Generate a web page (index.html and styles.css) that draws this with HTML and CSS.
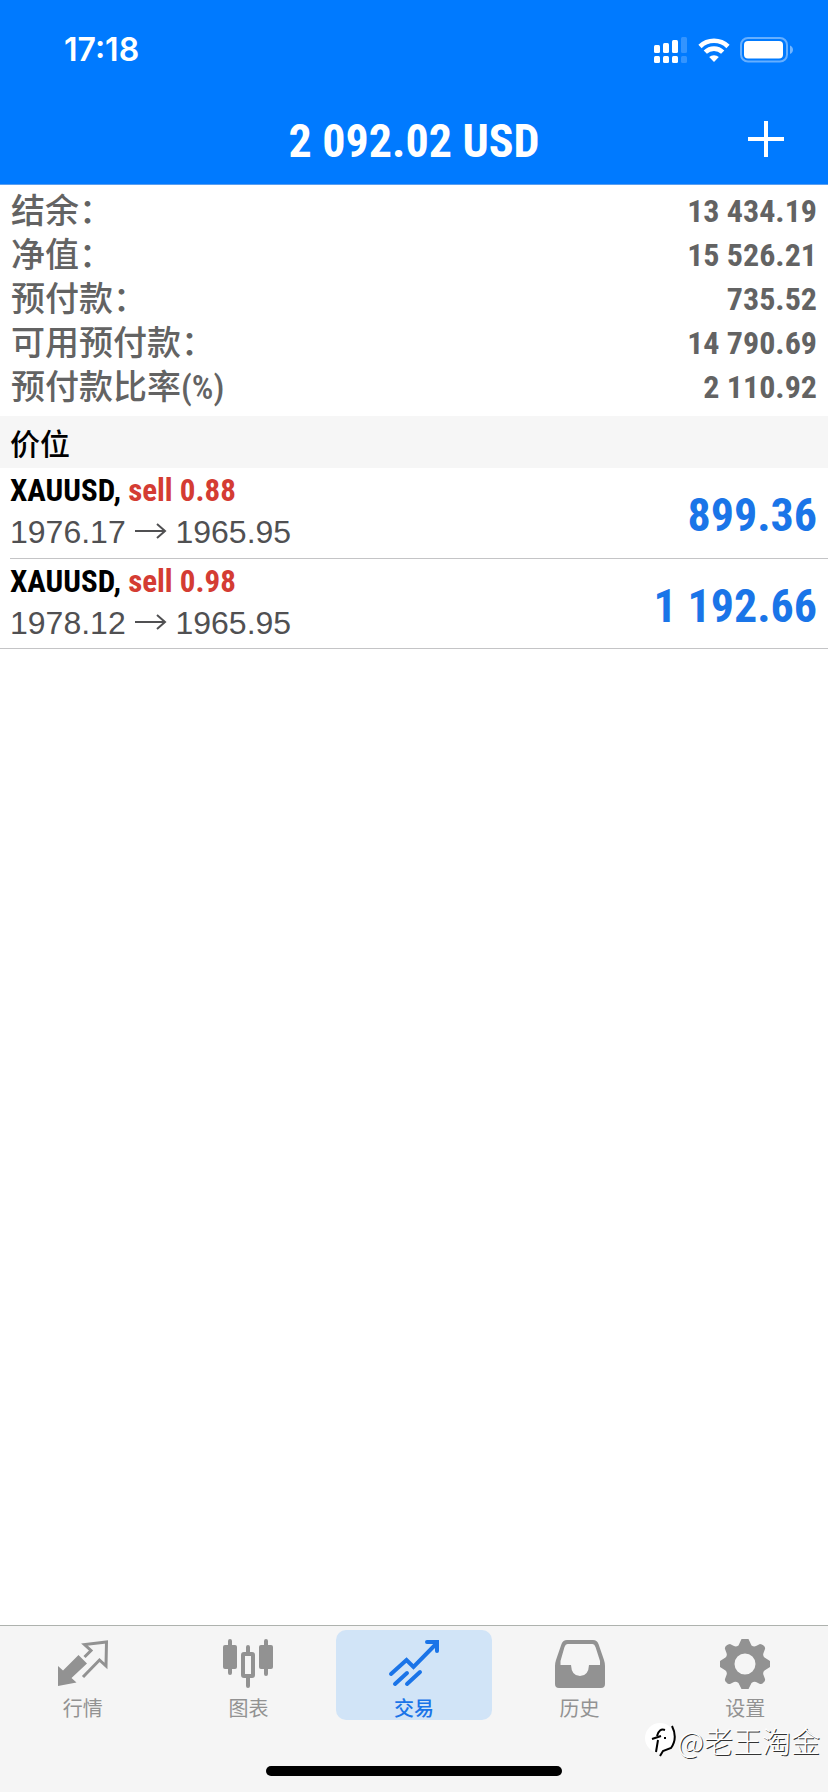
FILE: index.html
```html
<!DOCTYPE html>
<html lang="zh-CN">
<head>
<meta charset="utf-8">
<meta name="viewport" content="width=device-width, initial-scale=1">
<title>交易</title>
<link rel="stylesheet" href="styles.css">
</head>
<body>
<div class="app">
  <header class="header">
    <div class="status">
      <time class="clock">17:18</time>
      <div class="status-icons">
        <svg class="signal" width="34" height="28" viewBox="0 0 34 28" fill="#fff" aria-hidden="true">
          <rect x="0" y="9" width="6" height="8" rx="1.5"/><rect x="9" y="7" width="6" height="10" rx="1.5"/><rect x="18" y="4" width="6" height="13" rx="1.5"/><rect x="27" y="1" width="6" height="16" rx="1.5" opacity=".2"/>
          <rect x="0" y="20" width="6" height="7" rx="1.5"/><rect x="9" y="20" width="6" height="7" rx="1.5"/><rect x="18" y="20" width="6" height="7" rx="1.5"/><rect x="27" y="20" width="6" height="7" rx="1.5" opacity=".2"/>
        </svg>
        <svg class="wifi" width="32" height="26" viewBox="0 0 32 26" fill="none" stroke="#fff" stroke-width="4.6" aria-hidden="true">
          <path d="M2 9.5A20 20 0 0 1 30 9.5"/><path d="M7.3 15.2A12.4 12.4 0 0 1 24.7 15.2"/><path d="M16 25l-4.8-4.9a6.9 6.9 0 0 1 9.6 0z" fill="#fff" stroke="none"/>
        </svg>
        <svg class="battery" width="54" height="26" viewBox="0 0 54 26" aria-hidden="true">
          <rect x="1" y="1" width="46" height="23.500" rx="7" fill="none" stroke="#fff" stroke-width="2" opacity=".4"/><rect x="4" y="4" width="39" height="17.500" rx="4" fill="#fff"/><path d="M50 8.500c4 1.500 4 7 0 8.500z" fill="#fff" opacity=".45"/>
        </svg>
      </div>
    </div>
    <div class="navbar">
      <h1 class="title">2 092.02 USD</h1>
      <button class="add" type="button" aria-label="新订单">
        <svg width="36" height="36" viewBox="0 0 36 36" stroke="#fff" stroke-width="4" aria-hidden="true"><path d="M0 18H36M18 0V36"/></svg>
      </button>
    </div>
  </header>

  <main class="main">
    <dl class="stats">
      <div class="stat"><dt>结余：</dt><dd>13 434.19</dd></div>
      <div class="stat"><dt>净值：</dt><dd>15 526.21</dd></div>
      <div class="stat"><dt>预付款：</dt><dd>735.52</dd></div>
      <div class="stat"><dt>可用预付款：</dt><dd>14 790.69</dd></div>
      <div class="stat"><dt>预付款比率(%)</dt><dd>2 110.92</dd></div>
    </dl>
    <h2 class="section">价位</h2>
    <ul class="positions">
      <li class="position">
        <div class="info">
          <p class="deal">XAUUSD, <span class="sell">sell 0.88</span></p>
          <p class="prices">1976.17 <svg class="arrow" width="32" height="20" viewBox="0 0 32 20" role="img" aria-label="至"><path d="M0 8H30M22 1L30 8L22 15"/></svg> 1965.95</p>
        </div>
        <span class="profit">899.36</span>
      </li>
      <li class="position">
        <div class="info">
          <p class="deal">XAUUSD, <span class="sell">sell 0.98</span></p>
          <p class="prices">1978.12 <svg class="arrow" width="32" height="20" viewBox="0 0 32 20" role="img" aria-label="至"><path d="M0 8H30M22 1L30 8L22 15"/></svg> 1965.95</p>
        </div>
        <span class="profit">1 192.66</span>
      </li>
    </ul>
  </main>

  <footer class="footer">
    <nav class="tabs">
      <button class="tab" type="button">
        <svg class="icon" viewBox="0 0 52 52" aria-hidden="true">
          <path d="M1 28L6 32.500L21.500 17L30 25.500L14.500 40L19.500 44.500L1 48z" fill="currentColor"/>
          <path d="M27.500 19L34 12.500L27.500 6.500L49.500 4L49 28L42.500 22L26 39" fill="none" stroke="currentColor" stroke-width="3"/>
        </svg>
        <span>行情</span>
      </button>
      <button class="tab" type="button">
        <svg class="icon" viewBox="0 0 52 52" aria-hidden="true">
          <g fill="currentColor"><rect x="1" y="7" width="14" height="24" rx="2"/><rect x="37" y="7" width="14" height="24" rx="2"/></g>
          <path d="M8 3V35M44 3V36M26 9V16M26 40V48" stroke="currentColor" stroke-width="4" stroke-linecap="round"/>
          <rect x="21" y="16" width="10" height="22" rx="1" fill="none" stroke="currentColor" stroke-width="4"/>
        </svg>
        <span>图表</span>
      </button>
      <button class="tab tab-active" type="button" aria-current="page">
        <svg class="icon" viewBox="0 0 52 52" fill="none" stroke="currentColor" stroke-width="4" stroke-linecap="round" aria-hidden="true">
          <path d="M3 36L18.500 22L25.500 29L49 5M39 4H49V13M7 46L19 35M19 46L32 34"/>
        </svg>
        <span>交易</span>
      </button>
      <button class="tab" type="button">
        <svg class="icon" viewBox="0 0 52 52" aria-hidden="true">
          <path fill="currentColor" fill-rule="evenodd" d="M13 2H39Q43 2 44.500 6L50 22Q51 25 51 28V46Q51 50 47 50H5Q1 50 1 46V28Q1 25 2 22L7.500 6Q9 2 13 2zM13.500 6Q11.500 6 10.500 9L6.500 23V27H17Q17.500 38 26 38T35 27H46V23L41.500 9Q40.500 6 38.500 6z"/>
        </svg>
        <span>历史</span>
      </button>
      <button class="tab" type="button">
        <svg class="icon" viewBox="0 0 52 52" aria-hidden="true">
          <path fill="currentColor" fill-rule="evenodd" d="M22.500 1H29.500L32.500 7.500Q35 9 37 8L41 6Q43 6 44.500 7.500Q46.500 9 46 11L44.500 15Q43.500 18 45.500 19.500L51 23V29L45.500 32.500Q43.500 34 44.500 37L46 41Q46.500 43 44.500 44.500Q43 46.500 41 46L37 44Q35 43 32.500 45L29.500 51H22.500L19.500 45Q17 43 15 44L11 46Q9 46.500 7.500 44.500Q5.500 43 6 41L7.500 37Q8.500 34 6.500 32.500L1 29V23L6.500 19.500Q8.500 18 7.500 15L6 11Q5.500 9 7.500 7.500Q9 6 11 6L15 8Q17 9 19.500 7.500zM26 15.500A10.500 10.500 0 1 0 26 36.500A10.500 10.500 0 1 0 26 15.500z"/>
        </svg>
        <span>设置</span>
      </button>
    </nav>
    <div class="home-indicator"></div>
    <div class="watermark">
      <svg width="34" height="36" viewBox="0 0 34 36" fill="none" aria-hidden="true">
        <circle cx="16" cy="16" r="15" fill="#fff"/>
        <path d="M12 30L14 18M8 17L17 14M13 14Q15 6 21 8M20 16h2" stroke="#000" stroke-width="2"/><path d="M28 4Q34 16 27 26L19 29L16 34" stroke="#000" stroke-width="2"/>
      </svg>
      <span>@老王淘金</span>
    </div>
  </footer>
</div>
</body>
</html>
```
FILE: styles.css
```css
* {
  box-sizing: border-box;
}

body,
h1,
h2,
p,
dl,
dd,
ul {
  margin: 0;
  padding: 0;
}

body {
  --condensed: "Roboto Condensed", "Liberation Sans", "Noto Sans CJK SC", sans-serif;
  background: #fff;
  color: #000;
  font-family: "Liberation Sans", "Noto Sans CJK SC", sans-serif;
}

button {
  border: 0;
  padding: 0;
  background: none;
  color: inherit;
  font: inherit;
}

.app {
  display: flex;
  flex-direction: column;
  min-height: 100vh;
}

.header {
  background: #007aff;
  border-bottom: 1px solid #5a9ff0;
  color: #fff;
}

.status {
  display: flex;
  align-items: center;
  justify-content: space-between;
  height: 100px;
  padding: 0 34px 0 64px;
}

.clock {
  font: 600 32px/40px Inter, sans-serif;
}

.status-icons {
  display: flex;
  align-items: center;
  gap: 10px;
}

.navbar {
  display: grid;
  grid-template-columns: 1fr auto 1fr;
  align-items: center;
  height: 84px;
  padding: 0 44px 6px;
}

.title {
  grid-column: 2;
  padding-top: 4px;
  font: 700 46px/60px var(--condensed);
}

.add {
  justify-self: end;
  display: flex;
}

.main {
  flex: 1;
}

.stats {
  padding: 4px 11px 7px;
  color: #636363;
  font: 700 32px/44px var(--condensed);
}

.stat {
  display: flex;
  justify-content: space-between;
}

.stat dt {
  font-size: 34px;
  font-weight: 500;
}

.section {
  padding: 0 10px;
  background: #f6f6f6;
  font: 500 30px/52px "Noto Sans CJK SC", sans-serif;
}

.positions {
  list-style: none;
  border-bottom: 1px solid #c4c4c6;
}

.position {
  display: flex;
  align-items: center;
  justify-content: space-between;
  height: 90px;
  margin-left: 10px;
  padding-right: 11px;
}

.position + .position {
  border-top: 1px solid #c4c4c6;
}

.info {
  padding-bottom: 4px;
}

.deal {
  font: 700 31px/42px var(--condensed);
}

.sell {
  color: #d43c33;
}

.prices {
  color: #505052;
  font-size: 32px;
  line-height: 40px;
}

.arrow {
  fill: none;
  stroke: currentColor;
  stroke-width: 2;
}

.profit {
  padding-top: 4px;
  color: #1a75e8;
  font: 700 46px/60px var(--condensed);
}

.footer {
  position: relative;
  display: flex;
  flex-direction: column;
  align-items: center;
  gap: 46px;
  padding: 4px 0 16px;
  background: #f5f5f5;
  border-top: 1px solid #aeb2ae;
}

.tabs {
  display: grid;
  grid-template-columns: repeat(5, 1fr);
  width: 100%;
}

.tab {
  display: flex;
  flex-direction: column;
  align-items: center;
  gap: 6px;
  height: 90px;
  margin: 0 5px;
  padding-top: 8px;
  border-radius: 10px;
  color: #929292;
  font: 400 20px/24px "Noto Sans CJK SC", sans-serif;
}

.tab-active {
  background: #d1e4f7;
  color: #1a74e8;
  font-weight: 500;
}

.icon {
  flex: none;
  width: 52px;
  height: 52px;
}

.home-indicator {
  width: 296px;
  height: 10px;
  border-radius: 5px;
  background: #000;
}

.watermark {
  position: absolute;
  right: 8px;
  bottom: 32px;
  display: flex;
  align-items: center;
  color: #fff;
  font: 300 29px/40px "Noto Sans CJK SC", sans-serif;
  text-shadow: 1px 1px 0 #333;
}
```
